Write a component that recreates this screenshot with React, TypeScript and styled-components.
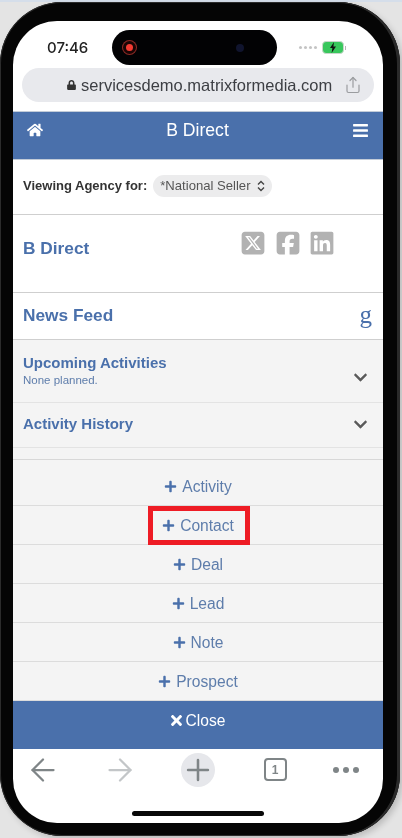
import React from "react";
import styled, { createGlobalStyle } from "styled-components";
import { FaBars, FaChevronDown, FaHome, FaLock, FaPlus, FaTimes } from "react-icons/fa";
import { FaLinkedin, FaSquareFacebook, FaSquareXTwitter } from "react-icons/fa6";
import { ArrowLeft, ArrowRight, Plus, Share } from "lucide-react";

const blue = "#4a70ab";

const GlobalStyle = createGlobalStyle`
  html, body {
    margin: 0;
    padding: 0;
  }
  body {
    width: 402px;
    height: 838px;
    overflow: hidden;
    background: #e4e4e4;
    font-family: "Liberation Sans", Arial, sans-serif;
  }
`;

const TopStrip = styled.div`
  height: 2px;
  background: #d5deea;
`;

const Phone = styled.div`
  box-sizing: border-box;
  width: 400px;
  height: 834px;
  padding: 19px 17px 13px 13px;
  border-radius: 62px;
  background: #050505;
  box-shadow: inset -3px 0 0 #2a2a2a, inset 0 0 0 1px #2c2c2c, 3px 3px 6px rgba(0, 0, 0, 0.18);
`;

const Screen = styled.div`
  display: flex;
  flex-direction: column;
  height: 802px;
  overflow: hidden;
  border-radius: 44px;
  background: #fff;
  filter: blur(0.35px);
`;

const StatusBar = styled.div`
  display: flex;
  align-items: center;
  height: 47px;
  flex-shrink: 0;
  padding: 6px 37px 0 34px;
  box-sizing: border-box;
`;

const Time = styled.span`
  width: 65px;
  font-family: Inter, "Liberation Sans", sans-serif;
  font-size: 15px;
  font-weight: 500;
  color: #222;
`;

const Island = styled.div`
  display: flex;
  align-items: center;
  justify-content: space-between;
  width: 165px;
  height: 35px;
  padding: 0 33px 0 14px;
  box-sizing: border-box;
  border-radius: 18px;
  background: #020204;
`;

const RecordDot = styled.span`
  width: 7px;
  height: 7px;
  border-radius: 50%;
  background: #f33b32;
  box-shadow: 0 0 0 3px #1a0505, 0 0 0 4px #8d2a25;
`;

const Camera = styled.span`
  width: 8px;
  height: 8px;
  border-radius: 50%;
  background: #10142e;
`;

const StatusRight = styled.div`
  display: flex;
  align-items: center;
  margin-left: auto;
`;

const SignalDots = styled.div`
  display: flex;
  gap: 2px;
  margin-right: 5px;
`;

const SignalDot = styled.span`
  width: 3px;
  height: 3px;
  border-radius: 50%;
  background: #c4c4c4;
`;

const Battery = styled.div`
  display: flex;
  align-items: center;
  justify-content: center;
  width: 22px;
  height: 13px;
  box-sizing: border-box;
  border: 1.5px solid #c9d6cb;
  border-radius: 4px;
  background: #38c75c;
`;

const BatteryNib = styled.span`
  width: 1.5px;
  height: 4px;
  margin-left: 1px;
  background: #b5b5b5;
`;

const UrlArea = styled.div`
  height: 43px;
  flex-shrink: 0;
  padding: 0 9px;
  box-sizing: border-box;
`;

const UrlPill = styled.div`
  display: flex;
  align-items: center;
  height: 34px;
  padding-left: 45px;
  border-radius: 17px;
  background: #e8e9ed;
  color: #3d3f44;
  font-size: 16.5px;
  white-space: nowrap;
`;

const LockIcon = styled(FaLock)`
  width: 9px;
  height: 10px;
  margin-right: 5px;
  color: #333;
`;

const ShareIcon = styled(Share)`
  margin-left: 12px;
  flex-shrink: 0;
  color: #9a9c9f;
`;

const Header = styled.header`
  display: flex;
  align-items: flex-start;
  justify-content: space-between;
  height: 49px;
  flex-shrink: 0;
  padding: 8px 14px 0 14px;
  box-sizing: border-box;
  background: ${blue};
  color: #fff;
  border-top: 1px solid #c3ccd8;
  border-bottom: 1px solid #c3ccd8;
  svg {
    margin-top: 2px;
  }
`;

const HeaderTitle = styled.span`
  font-size: 17.6px;
  line-height: 20px;
`;

const AgencyRow = styled.div`
  display: flex;
  align-items: center;
  gap: 6px;
  height: 55px;
  flex-shrink: 0;
  padding: 0 10px 3px;
  box-sizing: border-box;
  border-bottom: 1px solid #cfcfcf;
  font-size: 13px;
  font-weight: 700;
  color: #333;
`;

const AgencySelect = styled.span`
  display: flex;
  align-items: center;
  gap: 6px;
  height: 22px;
  padding: 0 7px;
  border-radius: 11px;
  background: #ececed;
  color: #555;
  font-weight: 400;
  font-size: 13.1px;
`;

const CompanyRow = styled.div`
  display: flex;
  justify-content: space-between;
  height: 78px;
  flex-shrink: 0;
  padding: 15px 48px 0 10px;
  box-sizing: border-box;
  border-bottom: 1px solid #cfcfcf;
`;

const BlueTitle = styled.h2`
  margin: 0;
  font-size: 17.3px;
  line-height: 20px;
  font-weight: 700;
  color: ${blue};
`;

const CompanyTitle = styled(BlueTitle)`
  margin-top: 8px;
`;

const Socials = styled.div`
  display: flex;
  gap: 8.5px;
  color: #b2b2b2;
  font-size: 26px;
  height: 26px;
`;

const NewsRow = styled.div`
  display: flex;
  align-items: center;
  justify-content: space-between;
  height: 47px;
  flex-shrink: 0;
  padding: 0 11px 2px 10px;
  box-sizing: border-box;
  border-bottom: 1px solid #cfcfcf;
`;

const GoogleMark = styled.span`
  font-family: "Liberation Serif", serif;
  font-size: 25px;
  line-height: 24px;
  color: ${blue};
`;

const Panel = styled.div`
  display: flex;
  flex-direction: column;
  flex: 1;
  background: #f4f4f4;
`;

const Accordion = styled.div<{ $height: number }>`
  display: flex;
  align-items: center;
  justify-content: space-between;
  height: ${(p) => p.$height}px;
  padding: 0 15px 2px 10px;
  box-sizing: border-box;
  border-bottom: 1px solid #e3e3e3;
`;

const SectionTitle = styled(BlueTitle)`
  font-size: 15px;
  line-height: 18px;
`;

const SectionNote = styled.div`
  margin-top: 2px;
  font-size: 11.5px;
  line-height: 13px;
  color: #5e7dab;
`;

const Chevron = styled(FaChevronDown)`
  width: 15px;
  height: 15px;
  color: #5a5a5a;
`;

const UpcomingChevron = styled(Chevron)`
  margin-top: 15px;
`;

const Spacer = styled.div`
  height: 12px;
  box-sizing: border-box;
  border-bottom: 1px solid #d8d8d8;
`;

const ActionRow = styled.div<{ $first?: boolean }>`
  position: relative;
  display: flex;
  align-items: center;
  justify-content: center;
  gap: 5px;
  height: ${(p) => (p.$first ? 46 : 39)}px;
  padding-top: ${(p) => (p.$first ? 8 : 1)}px;
  box-sizing: border-box;
  border-bottom: 1px solid #dcdcdc;
  color: #5e7dab;
  font-size: 15.6px;
  svg {
    width: 13px;
    height: 13px;
    color: ${blue};
  }
`;

const Highlight = styled.span`
  position: absolute;
  left: 135px;
  top: 0;
  width: 102px;
  height: 39px;
  box-sizing: border-box;
  border: 5px solid #ee1c25;
`;

const CloseBar = styled.div`
  display: flex;
  align-items: flex-start;
  justify-content: center;
  gap: 4px;
  height: 48px;
  padding-top: 11px;
  box-sizing: border-box;
  background: ${blue};
  color: #fff;
  font-size: 15.6px;
  line-height: 17px;
  svg {
    width: 11px;
    height: 17px;
  }
`;

const Toolbar = styled.nav`
  display: grid;
  grid-template-columns: 60px 94px 62px 92px 50px;
  justify-items: center;
  align-items: center;
  height: 37px;
  flex-shrink: 0;
  margin-top: 2px;
  color: #7f8587;
`;

const NewTabButton = styled.span`
  display: flex;
  align-items: center;
  justify-content: center;
  width: 34px;
  height: 34px;
  border-radius: 50%;
  background: #e6e7eb;
  svg {
    flex-shrink: 0;
  }
`;

const TabCount = styled.span`
  display: flex;
  align-items: center;
  justify-content: center;
  width: 23px;
  height: 23px;
  box-sizing: border-box;
  border: 2px solid #7f8587;
  border-radius: 4px;
  font-size: 12px;
  font-weight: 700;
`;

const MoreDots = styled.span`
  display: flex;
  gap: 4px;
`;

const MoreDot = styled.span`
  width: 6px;
  height: 6px;
  border-radius: 50%;
  background: #7f8587;
`;

const HomeBarArea = styled.div`
  display: flex;
  justify-content: center;
  height: 35px;
  padding-top: 23px;
  box-sizing: border-box;
`;

const HomeBar = styled.span`
  width: 132px;
  height: 5px;
  border-radius: 3px;
  background: #080808;
`;

const actions = ["Activity", "Contact", "Deal", "Lead", "Note", "Prospect"];

export default function App() {
  return (
    <>
      <GlobalStyle />
      <TopStrip />
      <Phone>
        <Screen>
          <StatusBar>
            <Time>07:46</Time>
            <Island>
              <RecordDot />
              <Camera />
            </Island>
            <StatusRight>
              <SignalDots>
                <SignalDot />
                <SignalDot />
                <SignalDot />
                <SignalDot />
              </SignalDots>
              <Battery>
                <svg width="8" height="11" viewBox="0 0 8 11">
                  <path d="M5 0 1 6h2.4L2.6 11 7 4.6H4.4z" fill="#111" />
                </svg>
              </Battery>
              <BatteryNib />
            </StatusRight>
          </StatusBar>
          <UrlArea>
            <UrlPill>
              <LockIcon />
              servicesdemo.matrixformedia.com
              <ShareIcon size={18} strokeWidth={1.6} />
            </UrlPill>
          </UrlArea>
          <Header>
            <FaHome size={16} />
            <HeaderTitle>B Direct</HeaderTitle>
            <FaBars size={17} />
          </Header>
          <AgencyRow>
            Viewing Agency for:
            <AgencySelect>
              *National Seller
              <svg width="8" height="12" viewBox="0 0 8 12" fill="none" stroke="#444" strokeWidth="1.4">
                <path d="M1 4.5 4 1.5l3 3M1 7.5l3 3 3-3" />
              </svg>
            </AgencySelect>
          </AgencyRow>
          <CompanyRow>
            <CompanyTitle>B Direct</CompanyTitle>
            <Socials>
              <FaSquareXTwitter />
              <FaSquareFacebook />
              <FaLinkedin />
            </Socials>
          </CompanyRow>
          <NewsRow>
            <BlueTitle>News Feed</BlueTitle>
            <GoogleMark>g</GoogleMark>
          </NewsRow>
          <Panel>
            <Accordion $height={63}>
              <div>
                <SectionTitle>Upcoming Activities</SectionTitle>
                <SectionNote>None planned.</SectionNote>
              </div>
              <UpcomingChevron />
            </Accordion>
            <Accordion $height={45}>
              <SectionTitle>Activity History</SectionTitle>
              <Chevron />
            </Accordion>
            <Spacer />
            {actions.map((label, i) => (
              <ActionRow key={label} $first={i === 0}>
                <FaPlus />
                {label}
                {label === "Contact" && <Highlight />}
              </ActionRow>
            ))}
            <CloseBar>
              <FaTimes />
              Close
            </CloseBar>
          </Panel>
          <Toolbar>
            <ArrowLeft size={36} strokeWidth={1.5} />
            <ArrowRight size={36} strokeWidth={1.5} color="#c3c6c8" />
            <NewTabButton>
              <Plus size={34} strokeWidth={1.8} />
            </NewTabButton>
            <TabCount>1</TabCount>
            <MoreDots>
              <MoreDot />
              <MoreDot />
              <MoreDot />
            </MoreDots>
          </Toolbar>
          <HomeBarArea>
            <HomeBar />
          </HomeBarArea>
        </Screen>
      </Phone>
    </>
  );
}
